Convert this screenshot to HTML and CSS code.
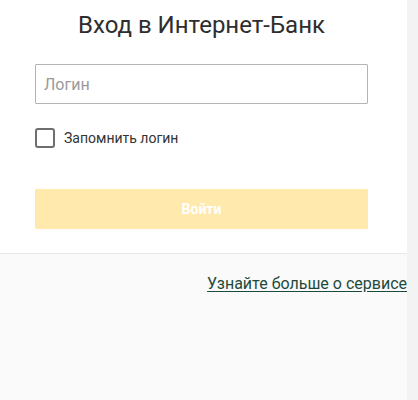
FILE: index.html
```html
<!DOCTYPE html>
<html lang="ru">
<head>
<meta charset="utf-8">
<title>Вход в Интернет-Банк</title>
<link rel="stylesheet" href="styles.css">
</head>
<body>
<div class="page">
  <div class="main">
    <form class="card">
      <h1 class="title">Вход в Интернет-Банк</h1>
      <input class="field" type="text" placeholder="Логин">
      <label class="remember">
        <span class="box"></span>
        <span class="remember-text">Запомнить логин</span>
      </label>
      <button class="submit" type="button">Войти</button>
    </form>
    <div class="footer">
      <a class="more" href="#">Узнайте больше о сервисе</a>
    </div>
  </div>
  <div class="side"></div>
</div>
</body>
</html>
```
FILE: styles.css
```css
html, body {
  margin: 0;
  padding: 0;
  height: 100%;
}
body {
  font-family: Roboto, "Noto Sans", sans-serif;
  background: #fafafa;
  color: #333;
}
.page {
  display: flex;
  height: 400px;
}
.main {
  width: 407px;
  display: flex;
  flex-direction: column;
}
.side {
  flex: 1;
  background: #f3f3f3;
}
.card {
  background: #fff;
  border-bottom: 1px solid #e8e8e8;
  padding: 10px 39px 24px 35px;
  display: flex;
  flex-direction: column;
  height: 219px;
}
.title {
  margin: 0;
  font-size: 24px;
  font-weight: 400;
  line-height: 30px;
  text-align: center;
  color: #2e2e2e;
}
.field {
  margin-top: 24px;
  height: 40px;
  box-sizing: border-box;
  border: 1px solid #b4b4b4;
  border-radius: 1px;
  padding: 0 8px;
  font-family: Roboto, sans-serif;
  font-size: 16px;
  color: #333;
  outline: none;
}
.field::placeholder {
  color: #9a9a9a;
}
.remember {
  margin-top: 24px;
  display: flex;
  align-items: center;
  gap: 9px;
  height: 20px;
}
.box {
  width: 16px;
  height: 16px;
  border: 2px solid #6e6e6e;
  border-radius: 3px;
}
.remember-text {
  font-size: 14px;
  color: #333;
}
.submit {
  margin-top: 41px;
  height: 40px;
  border: none;
  background: #ffe9ad;
  color: #fff;
  font-family: Roboto, sans-serif;
  font-weight: 700;
  font-size: 14px;
  border-radius: 1px;
}
.footer {
  display: flex;
  justify-content: flex-end;
  padding-top: 20px;
}
.more {
  font-size: 16px;
  color: #1e4a3c;
  text-decoration: underline;
  text-underline-offset: 2px;
}
```
